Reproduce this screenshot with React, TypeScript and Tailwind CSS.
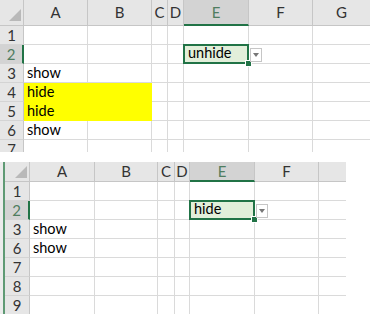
import React from 'react';

type Col = { label: string; w: string; last?: boolean };
type Cells = Record<string, { text?: string; yellow?: boolean }>;

type SheetProps = {
  cols: Col[];
  rowHeadW: string;
  headH: string;
  rows: string[];
  cells: Cells;
  selCol: string;
  selRow: string;
  triangle: string;
};

const Sheet: React.FC<SheetProps> = ({ cols, rowHeadW, headH, rows, cells, selCol, selRow, triangle }) => {
  return (
    <div className="flex flex-col">
      {/* column headers */}
      <div className={`flex ${headH}`}>
        <div className={`${rowHeadW} shrink-0 relative bg-[#e6e6e6] border-r border-b border-[#c6c6c6]`}>
          <svg className={`absolute ${triangle}`} width="12" height="12" viewBox="0 0 12 12">
            <polygon points="12,0 12,12 0,12" fill="#b9b9b9" />
          </svg>
        </div>
        {cols.map((c) => {
          const sel = c.label === selCol;
          return (
            <div
              key={c.label}
              className={`${c.w} shrink-0 flex items-center justify-center text-[15px] ${c.last ? '' : 'border-r'} ${
                sel
                  ? 'bg-[#d3d3d3] text-[#4f7d60] border-b-2 border-b-[#217346] border-r-[#c6c6c6]'
                  : 'bg-[#e6e6e6] text-[#333] border-b border-[#c6c6c6]'
              }`}
            >
              {c.label}
            </div>
          );
        })}
      </div>

      {rows.map((r) => {
        const rowSel = r === selRow;
        return (
          <div key={r} className="flex h-[19px]">
            <div
              className={`${rowHeadW} shrink-0 flex items-center justify-center text-[15px] border-b border-[#d4d4d4] ${
                rowSel
                  ? 'bg-[#d3d3d3] text-[#4f7d60] border-r-2 border-r-[#217346]'
                  : 'bg-[#e6e6e6] text-[#333] border-r border-r-[#c6c6c6]'
              }`}
            >
              {r}
            </div>
            {cols.map((c) => {
              const cell = cells[c.label + r];
              const isSel = rowSel && c.label === selCol;
              return (
                <div
                  key={c.label}
                  className={`${c.w} shrink-0 relative flex items-end pl-[3px] text-[14.5px] leading-[18px] text-black border-b ${
                    c.last ? '' : 'border-r'
                  } ${cell?.yellow ? 'bg-[#ffff00] border-[#ffff00]' : 'bg-white border-[#dadada]'}`}
                >
                  {!isSel && cell?.text}
                  {isSel && (
                    <>
                      <div className="absolute -left-px -top-px -right-px -bottom-px z-10 border-2 border-[#217346] bg-[#e2efda] flex items-end pl-[3px]">
                        {cell?.text}
                      </div>
                      <div className="absolute -right-[3px] -bottom-[3px] z-20 w-[5px] h-[5px] bg-[#217346] outline outline-1 outline-white" />
                      <div className="absolute left-[calc(100%+2px)] top-[3px] z-20 w-[12px] h-[14px] bg-white border border-[#c6c6c6] flex items-center justify-center">
                        <svg width="6" height="4" viewBox="0 0 6 4">
                          <polygon points="0,0 6,0 3,4" fill="#777" />
                        </svg>
                      </div>
                    </>
                  )}
                </div>
              );
            })}
          </div>
        );
      })}
    </div>
  );
};

const topCols: Col[] = [
  { label: 'A', w: 'w-[64px]' },
  { label: 'B', w: 'w-[64px]' },
  { label: 'C', w: 'w-[16px]' },
  { label: 'D', w: 'w-[16px]' },
  { label: 'E', w: 'w-[65px]' },
  { label: 'F', w: 'w-[64px]' },
  { label: 'G', w: 'w-[57px]', last: true },
];

const bottomCols: Col[] = [
  { label: 'A', w: 'w-[65px]' },
  { label: 'B', w: 'w-[63px]' },
  { label: 'C', w: 'w-[17px]' },
  { label: 'D', w: 'w-[15px]' },
  { label: 'E', w: 'w-[65px]' },
  { label: 'F', w: 'w-[64px]' },
  { label: '', w: 'w-[27px]', last: true },
];

const topCells: Cells = {
  A3: { text: 'show' },
  A4: { text: 'hide', yellow: true },
  B4: { yellow: true },
  A5: { text: 'hide', yellow: true },
  B5: { yellow: true },
  A6: { text: 'show' },
  E2: { text: 'unhide' },
};

const bottomCells: Cells = {
  A3: { text: 'show' },
  A6: { text: 'show' },
  E2: { text: 'hide' },
};

export default function App() {
  return (
    <div className="w-[370px] h-[314px] overflow-hidden bg-white font-['Lato','Liberation_Sans',sans-serif]">
      <div className="h-[152px] overflow-hidden">
        <Sheet
          cols={topCols}
          rowHeadW="w-[24px]"
          headH="h-[26px]"
          rows={['1', '2', '3', '4', '5', '6', '7']}
          cells={topCells}
          selCol="E"
          selRow="2"
          triangle="right-[2px] bottom-[4px]"
        />
      </div>
      <div className="mt-[10px] flex">
        <div className="w-[3px] shrink-0 bg-[#ececec]" />
        <div className="border-l-2 border-[#5f9a74]">
          <Sheet
            cols={bottomCols}
            rowHeadW="w-[25px]"
            headH="h-[20px]"
            rows={['1', '2', '3', '6', '7', '8', '9']}
            cells={bottomCells}
            selCol="E"
            selRow="2"
            triangle="right-[2px] bottom-[3px]"
          />
        </div>
      </div>
    </div>
  );
}
